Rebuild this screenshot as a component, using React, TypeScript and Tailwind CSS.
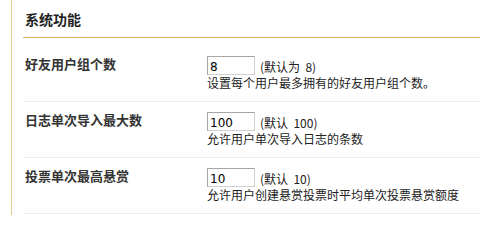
const rows = [
  {
    label: '好友用户组个数',
    value: '8',
    hint: '(默认为  8)',
    desc: '设置每个用户最多拥有的好友用户组个数。',
  },
  {
    label: '日志单次导入最大数',
    value: '100',
    hint: '(默认  100)',
    desc: '允许用户单次导入日志的条数',
  },
  {
    label: '投票单次最高悬赏',
    value: '10',
    hint: '(默认  10)',
    desc: '允许用户创建悬赏投票时平均单次投票悬赏额度',
  },
];

const cjk = { fontFamily: '"Noto Sans CJK SC", sans-serif' };

export default function App() {
  return (
    <div className="h-[215px] overflow-hidden bg-white text-[#222]" style={cjk}>
      <div className="ml-[11px] h-full border-l border-[#e3cb91] pl-[11px]">
        <h3 className="border-b border-[#d6b060] pt-[9px] pb-[8px] pl-[2px] text-[14px] font-bold leading-[20px]">
          系统功能
        </h3>
        <div className="mt-[8px]">
          {rows.map((row) => (
            <div key={row.label} className="flex border-b border-[#ececec] pt-[10px] pb-[10px] pl-[2px]">
              <div className="w-[182px] shrink-0 text-[13px] font-bold leading-[16px] text-[#333]">
                {row.label}
              </div>
              <div className="flex flex-col text-[12px]">
                <div className="flex items-end">
                  <input
                    type="text"
                    readOnly
                    defaultValue={row.value}
                    className="h-[19px] w-[48px] border border-[#cfcfcf] border-t-[#a6a6a6] border-l-[#a6a6a6] px-[2px] pt-[3px] text-[12px] leading-[14px] text-black outline-none"
                    style={{ fontFamily: '"DejaVu Sans", sans-serif' }}
                  />
                  <span className="ml-[5px] whitespace-pre leading-[16px]">{row.hint}</span>
                </div>
                <div className="leading-[16px]">{row.desc}</div>
              </div>
            </div>
          ))}
        </div>
      </div>
    </div>
  );
}
